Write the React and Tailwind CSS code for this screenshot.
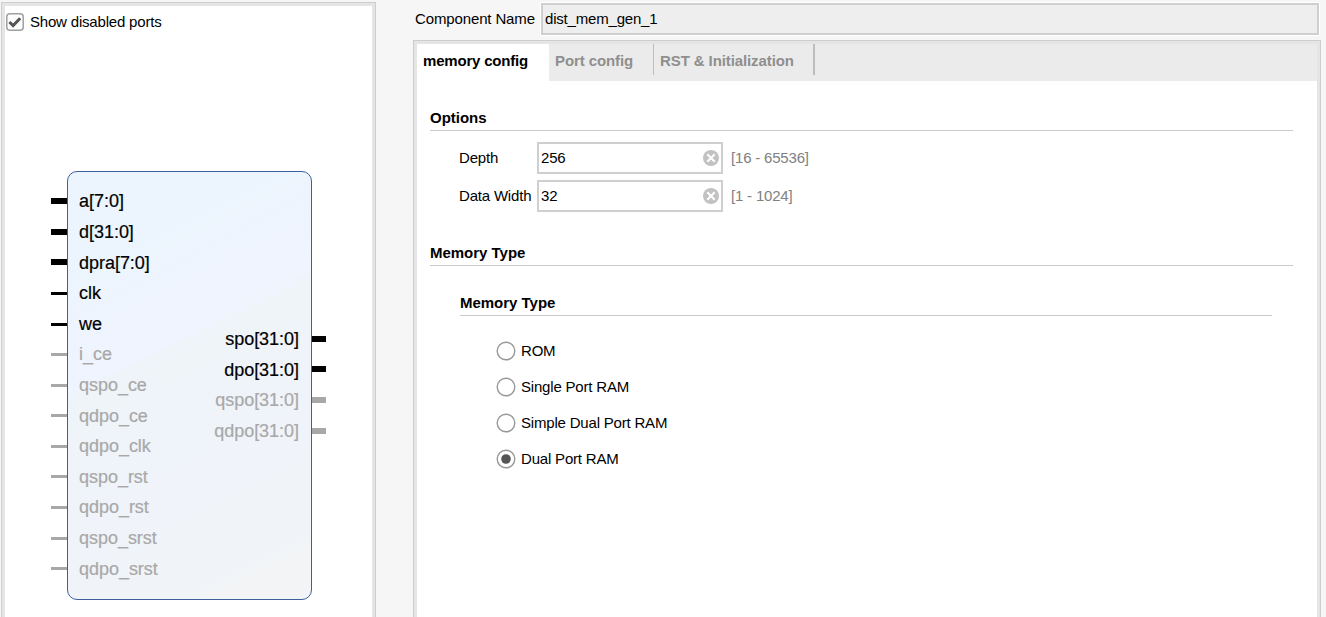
const inputs = [
  { name: 'a[7:0]', y: 201, bus: true, on: true },
  { name: 'd[31:0]', y: 232, bus: true, on: true },
  { name: 'dpra[7:0]', y: 262, bus: true, on: true, low: true },
  { name: 'clk', y: 293, on: true },
  { name: 'we', y: 324, on: true },
  { name: 'i_ce', y: 354 },
  { name: 'qspo_ce', y: 385 },
  { name: 'qdpo_ce', y: 415, low: true },
  { name: 'qdpo_clk', y: 446 },
  { name: 'qspo_rst', y: 476, low: true },
  { name: 'qdpo_rst', y: 507 },
  { name: 'qspo_srst', y: 538 },
  { name: 'qdpo_srst', y: 568, low: true },
];

const outputs = [
  { name: 'spo[31:0]', y: 339, on: true },
  { name: 'dpo[31:0]', y: 369, on: true, low: true },
  { name: 'qspo[31:0]', y: 400 },
  { name: 'qdpo[31:0]', y: 431 },
];

const BLOCK_TOP = 171;

function Port({ port, side }) {
  const left = side === 'left';
  const bus = port.bus || !left;
  const textColor = port.on ? 'text-black' : 'text-[#a8a8a8]';
  const pinColor = port.on ? 'bg-black' : 'bg-[#a8a8a8]';
  return (
    <div
      className={`absolute flex h-[20px] items-center ${left ? '-left-[17px]' : '-right-[15px] flex-row-reverse'}`}
      style={{ top: port.y - BLOCK_TOP - 11 }}
    >
      <span className={`${left ? 'w-[16px]' : 'w-[14px]'} ${bus ? 'h-[6px]' : 'relative top-[0.5px] h-[3px]'} ${pinColor}`} />
      <span
        className={`whitespace-nowrap text-[18px] leading-[20px] tracking-[-0.03px] [-webkit-text-stroke:0.2px] ${port.low ? 'pt-[2px]' : ''} ${left ? 'ml-[12px]' : 'mr-[13px]'} ${textColor}`}
      >
        {port.name}
      </span>
    </div>
  );
}

function Heading({ children }) {
  return (
    <h2 className="h-[23px] border-b border-[#cacaca] text-[15px] leading-[20px] font-bold tracking-[-0.02px]">
      {children}
    </h2>
  );
}

function Field({ label, value, range }) {
  return (
    <div className="flex h-8 items-center">
      <span className="w-[78px] whitespace-nowrap">{label}</span>
      <div className="flex h-8 w-[186px] items-center justify-between border-2 border-[#cfcfcf] pr-px pl-[2px]">
        <span>{value}</span>
        <svg className="size-[17px]" viewBox="0 0 17 17">
          <circle cx="8" cy="8" r="8" fill="#c2c2c2" />
          <path d="M4.3 4.3l7.4 7.4M11.7 4.3l-7.4 7.4" stroke="#fff" strokeWidth="2" />
        </svg>
      </div>
      <span className="ml-2 text-[#808080]">{range}</span>
    </div>
  );
}

function Radio({ label, checked }) {
  return (
    <div className="flex h-9 items-center gap-[5px]">
      <svg className="size-5" viewBox="0 0 20 20">
        <circle cx="10" cy="10" r="8.8" fill="#fff" stroke="#989898" strokeWidth="1.4" />
        {checked && <circle cx="10" cy="10" r="4.8" fill="#555" />}
      </svg>
      <span>{label}</span>
    </div>
  );
}

export default function App() {
  return (
    <div className="flex h-[617px] w-[1326px] overflow-hidden bg-[#f6f6f6] font-['Liberation_Sans',Arial,sans-serif] text-[15px] leading-[20px] tracking-[-0.19px] text-black">
      <section className="mt-[2px] ml-px h-[615px] w-[375px] border-t border-r border-l border-[#cdcdcd]">
        <div className="h-full border-t-[3px] border-r-[3px] border-l-[3px] border-[#e5e5e5] bg-white">
          <div className="flex h-[165px] items-start pt-[6px] pl-px">
            <svg className="mt-px size-[18px]" viewBox="0 0 18 18">
              <rect x="0.8" y="0.8" width="16.4" height="16.4" rx="3" fill="#fff" stroke="#a0a0a0" strokeWidth="1.5" />
              <path d="M3.4 9l3.7 3.6L14.2 5.2" fill="none" stroke="#555" strokeWidth="3" />
            </svg>
            <span className="ml-[6px] whitespace-nowrap">Show disabled ports</span>
          </div>
          <div className="relative ml-[62px] h-[429px] w-[245px] rounded-[10px] border border-[#3d5f9f] bg-[linear-gradient(153deg,#ecf5fd_0%,#ecf5fd_20%,#eef4fd_26%,#eff4fe_40%,#eff4f9_42%,#f0f4fa_65%,#f0f4f8_88%,#f3f4f6_90%,#f3f4f6_100%)]">
            {inputs.map((p) => (
              <Port key={p.name} port={p} side="left" />
            ))}
            {outputs.map((p) => (
              <Port key={p.name} port={p} side="right" />
            ))}
          </div>
        </div>
      </section>

      <section className="ml-[37px] flex w-[908px] flex-col">
        <div className="mt-[2px] flex h-[34px] items-center">
          <span className="mb-px ml-[2px] w-[125px] whitespace-nowrap tracking-[-0.13px]">Component Name</span>
          <div className="h-[34px] w-[780px] border border-white">
            <div className="flex h-[32px] items-center border-2 border-[#cfcfcf] bg-[#eee] pl-[2px]">
              <span className="mb-px">dist_mem_gen_1</span>
            </div>
          </div>
        </div>

        <div className="mt-[4px] h-[577px] border-t border-r border-l border-[#cdcdcd]">
          <div className="h-full border-t-[3px] border-r-[3px] border-l-[3px] border-[#e5e5e5] bg-white">
            <nav className="flex h-[37px] bg-[#ebebeb] font-bold tracking-[-0.1px] text-[#8f8f8f]">
              <div className="w-[132px] bg-white pt-[7px] pl-[6px] tracking-[-0.2px] text-black">memory config</div>
              <div className="h-[31px] w-[105px] border-r border-[#bdbdbd] pt-[7px] pl-[6px]">Port config</div>
              <div className="h-[31px] w-[161px] border-r-2 border-[#bdbdbd] pt-[7px] pl-[6px] whitespace-nowrap">
                RST &amp; Initialization
              </div>
            </nav>

            <div className="pt-[27px] pr-[24px] pl-[13px]">
              <Heading>Options</Heading>
              <div className="flex flex-col gap-[6px] pt-[11px] pl-[29px]">
                <Field label="Depth" value="256" range="[16 - 65536]" />
                <Field label="Data Width" value="32" range="[1 - 1024]" />
              </div>
              <div className="mt-[31px]">
                <Heading>Memory Type</Heading>
              </div>
              <div className="mt-[27px] mr-[21px] ml-[30px]">
                <Heading>Memory Type</Heading>
                <div className="pt-[17px] pl-[36px]">
                  <Radio label="ROM" />
                  <Radio label="Single Port RAM" />
                  <Radio label="Simple Dual Port RAM" />
                  <Radio label="Dual Port RAM" checked />
                </div>
              </div>
            </div>
          </div>
        </div>
      </section>
    </div>
  );
}
